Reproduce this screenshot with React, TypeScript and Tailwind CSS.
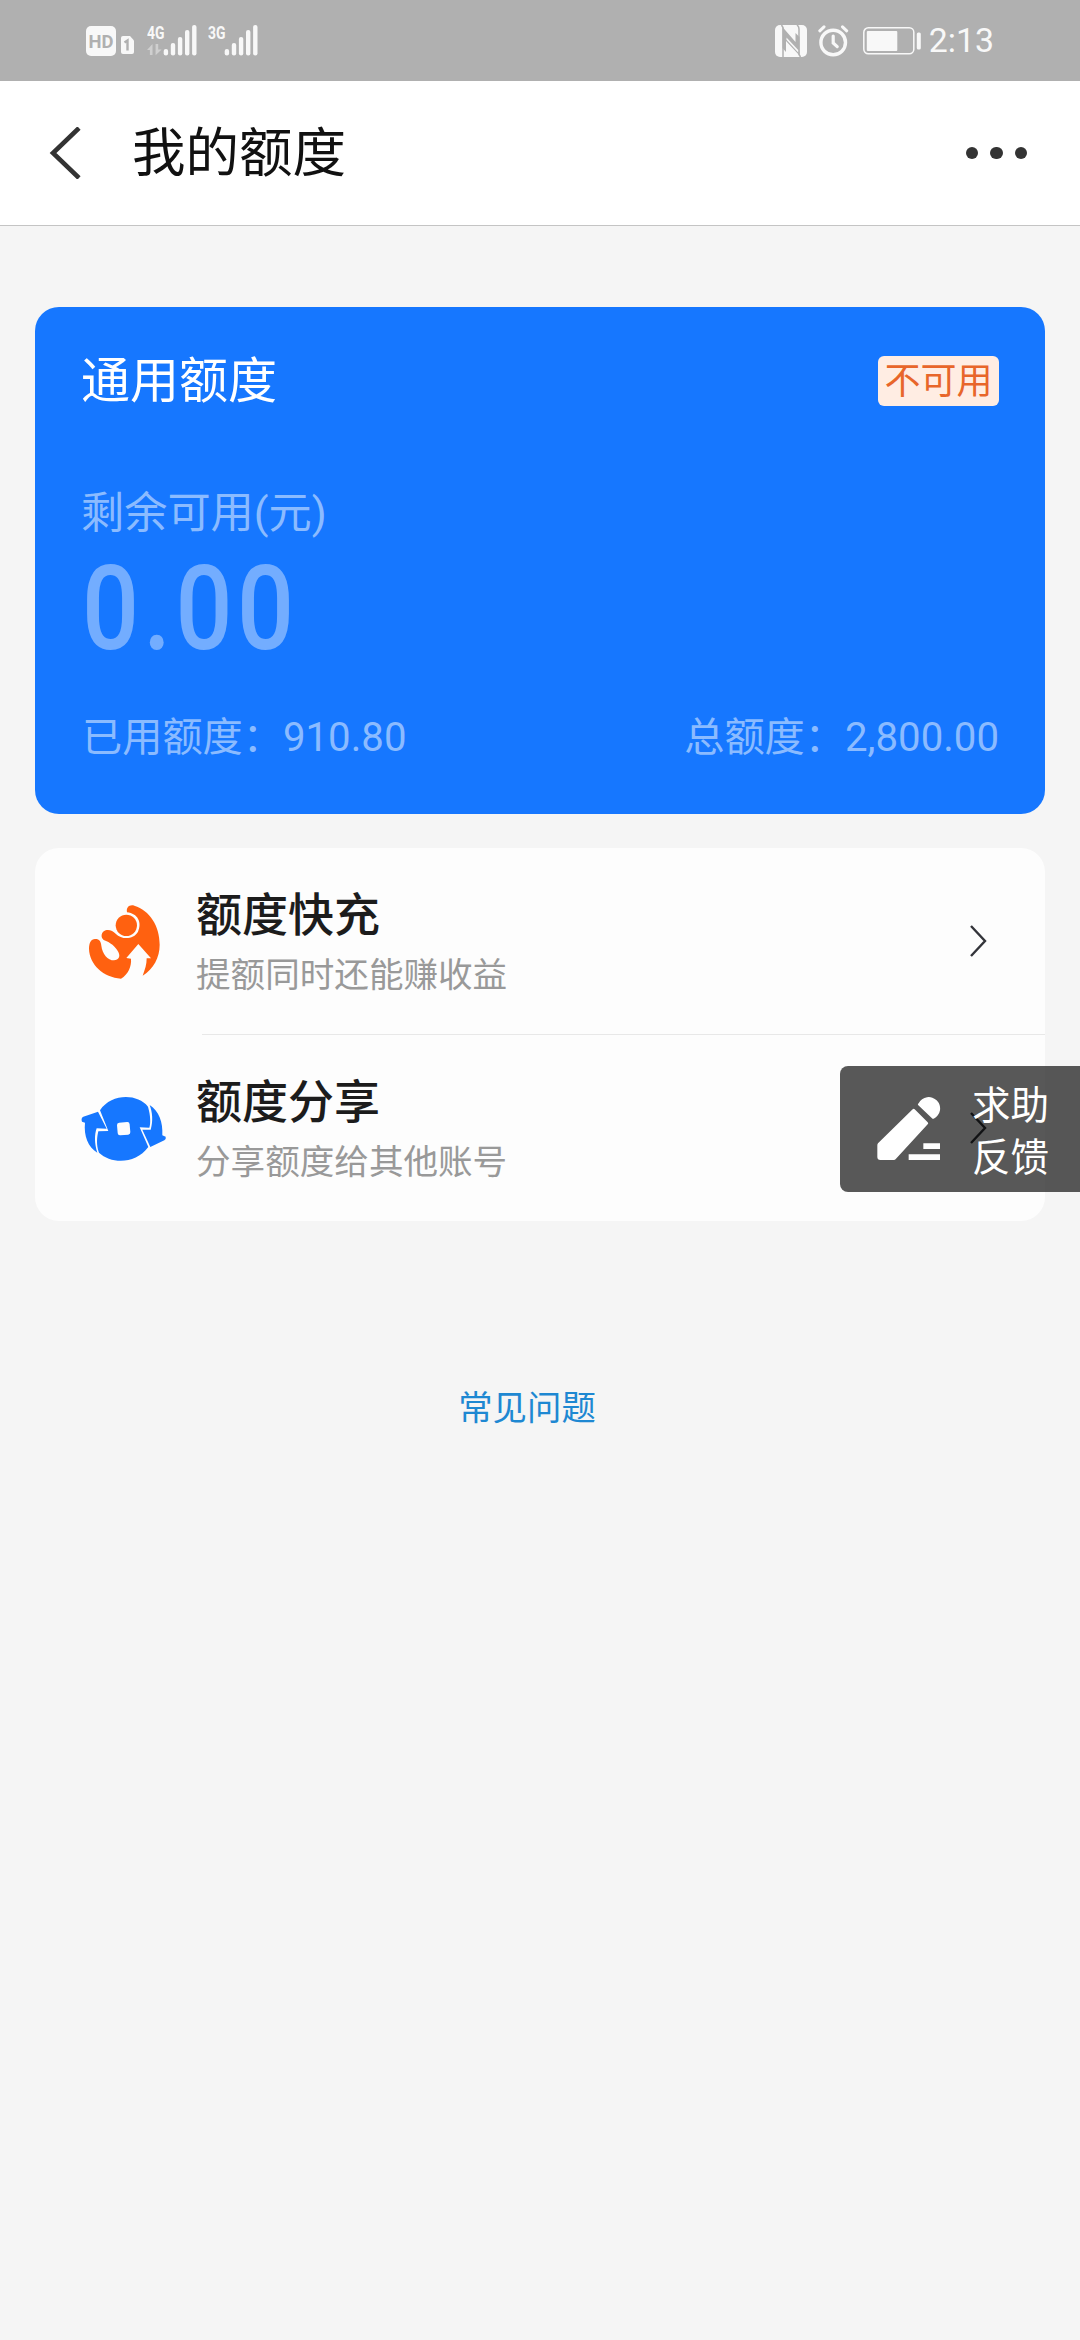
import React from 'react';

type SignalProps = {
  label: string;
  showTraffic?: boolean;
};

type QuotaRowProps = {
  title: string;
  desc: string;
  icon: React.ReactNode;
};

const SIGNAL_BARS = [49, 43, 37, 30, 25];

const HdIcon = () => (
  <svg width="49" height="32" viewBox="86 25 49 32">
    <rect x="86" y="26" width="30" height="30" rx="5" fill="#f8f8f8" />
    <text x="88.5" y="48" fontSize="18.5" fontWeight="700" textLength="25" lengthAdjust="spacingAndGlyphs" fill="#b0b0b0">
      HD
    </text>
    <path d="M123 36h7l4 4.5V52a2 2 0 0 1-2 2h-9a2 2 0 0 1-2-2V38a2 2 0 0 1 2-2z" fill="#f8f8f8" />
    <path d="M124.5 42.6l3-2v10" stroke="#b0b0b0" strokeWidth="2.4" fill="none" />
  </svg>
);

const Signal: React.FC<SignalProps> = ({ label, showTraffic }) => (
  <svg width="50" height="44" viewBox="0 19 50 44">
    <text x="0" y="38.7" fontSize="18.5" fontWeight="700" textLength="17.5" lengthAdjust="spacingAndGlyphs" fill="#f8f8f8">
      {label}
    </text>
    {showTraffic && (
      <path d="M0 50l5.5-6v11h-2.6v-5zM8.6 44h2.6v5.500h3.400l-6 5.800z" fill="#cfcfcf" />
    )}
    {SIGNAL_BARS.map((top, i) => (
      <rect key={top} x={16.7 + i * 7.1} y={top} width="4.4" height={55.5 - top} rx="2.1" fill="#f8f8f8" />
    ))}
  </svg>
);

const NfcIcon = () => (
  <svg width="32" height="32" viewBox="0 0 32 32">
    <rect width="32" height="32" rx="5" fill="#f8f8f8" />
    <path d="M6.5 0L8 2.5V32M25.5 32L24 29.5V4C24 2 23.3 1 22 0" stroke="#b0b0b0" strokeWidth="1.5" fill="none" />
    <path d="M7.5 2L20.5 17V8L24.5 12V30.5L11 16V27L7.5 23Z" fill="#b0b0b0" />
    <path d="M11.5 12.5L23.2 25V27.5L11.5 14.8Z" fill="#f8f8f8" />
  </svg>
);

const AlarmIcon = () => (
  <svg width="31" height="32" viewBox="0 0 31 32" fill="none" stroke="#f8f8f8" strokeLinecap="round">
    <circle cx="15.2" cy="17.5" r="12.3" strokeWidth="3.4" />
    <path d="M15.2 11v7l4 3.6" strokeWidth="3.2" />
    <path d="M1.8 5.8l4.200-4M28.700 5.800l-4.200-4" strokeWidth="3" />
  </svg>
);

const BatteryIcon = () => (
  <svg width="58" height="28" viewBox="0 0 58 28" fill="#f8f8f8">
    <rect x="0.8" y="0.8" width="50" height="26" rx="4.5" fill="none" stroke="#f8f8f8" strokeWidth="1.5" />
    <rect x="3.8" y="4" width="30.5" height="20" rx="1" />
    <rect x="53.8" y="5.5" width="4" height="17" rx="1.5" />
  </svg>
);

const BoostIcon = () => (
  <svg width="86" height="86" viewBox="0 0 258 258" fill="#ff6110">
    <path d="M138 43C135 28 145 19 160 23C206 38 236 82 236 140C236 178 218 212 185 233C192 214 197 200 197 181H210L172 138L136 180L150 182C152 206 142 228 120 242C68 238 25 200 24 152C24 134 30 124 42 123C54 122 60 130 61 143C64 168 80 187 99 187C113 186 119 176 112 162C104 146 88 133 68 126C58 118 60 102 74 97C86 94 96 100 104 107C124 127 158 124 171 101C184 74 170 46 138 43Z" />
    <circle cx="136" cy="82" r="32" />
  </svg>
);

const ShareIcon = () => (
  <svg width="95" height="76" viewBox="0 0 285 228" fill="#1677ff">
    {/* coin */}
    <path d="M72 61C106 10 184 10 216 50C224 78 224 100 220 113L191 112L217 171C178 224 105 222 69 188C60 165 63 140 67 124L97 123Z" />
    {/* arrows */}
    <path d="M66 65L92 116L62 115C55 135 55 160 64 188C36 170 23 138 27 98L18 95Q14 84 22 80Z" />
    <path d="M221 45C249 64 261 96 259 136L269 140Q271 148 265 151L223 171L199 119L224 119C232 92 229 66 221 45Z" />
    <rect x="124" y="97" width="38" height="38" rx="7" transform="rotate(-5 143 116)" fill="#fdfdfd" />
  </svg>
);

const PencilIcon = () => (
  <svg width="64" height="66" viewBox="0 -6 192 198" fill="#fff">
    <path d="M107 34a4 4 0 0 1 6 0l39 39a4 4 0 0 1 0 6L57 182a10 10 0 0 1-7 4H10a9 9 0 0 1-9-9v-35a9 9 0 0 1 2-6z" />
    <path d="M125 16a34 34 0 1 1 45 46a4 4 0 0 1-5-1L124 22a4 4 0 0 1 1-6z" />
    <path d="M139 136h50v17h-50zM95 169h94v17H95z" />
  </svg>
);

const QuotaRow: React.FC<QuotaRowProps> = ({ title, desc, icon }) => (
  <div className="flex h-[186px] items-center pl-[41px] pr-[57px]">
    <div className="flex w-[95px] shrink-0 justify-center">{icon}</div>
    <div className="ml-[25px] flex-1 pt-[8px]">
      <h3 className="text-[46px] leading-[60px] font-medium text-[#1c1c1c]">{title}</h3>
      <p className="text-[34.6px] leading-[60px] text-[#999]">{desc}</p>
    </div>
    <svg width="20" height="34" viewBox="0 0 20 34" fill="none" stroke="#33343a" strokeWidth="2.4">
      <path d="M3 2l14 15L3 32" />
    </svg>
  </div>
);

const StatusBar = () => (
  <div className="flex h-[81px] items-center bg-[#b0b0b0] px-[86px] text-[#f8f8f8]">
    <HdIcon />
    <div className="ml-3 flex gap-[11px]">
      <Signal label="4G" showTraffic />
      <Signal label="3G" />
    </div>
    <div className="ml-auto flex items-center">
      <NfcIcon />
      <div className="ml-[11px]">
        <AlarmIcon />
      </div>
      <div className="ml-3.5">
        <BatteryIcon />
      </div>
      <span className="ml-2 text-[33.8px] leading-[40px]">2:13</span>
    </div>
  </div>
);

const App: React.FC = () => {
  return (
    <div className="relative min-h-[2340px] w-[1080px] overflow-hidden bg-[#f5f5f5] font-[Roboto,'Noto_Sans_CJK_SC',sans-serif]" lang="zh-CN">
      <StatusBar />

      {/* HEADER */}
      <header className="flex h-[145px] items-center border-b border-[#c4c4c4] bg-white pl-[48px] pr-[53px]">
        <svg width="34" height="52" viewBox="0 0 34 52" fill="none" stroke="#333" strokeWidth="4.6">
          <path d="M31 1L5 26L31 51" />
        </svg>
        <h1 className="ml-[50px] pt-[2px] text-[53.5px] leading-[70px] text-[#111]">我的额度</h1>
        <div className="ml-auto flex gap-3">
          <i className="size-[12.3px] rounded-full bg-[#333]" />
          <i className="size-[12.3px] rounded-full bg-[#333]" />
          <i className="size-[12.3px] rounded-full bg-[#333]" />
        </div>
      </header>

      <main className="px-[35px] pt-[81px]">
        {/* QUOTA CARD */}
        <section className="h-[507px] rounded-[24px] bg-[#1677ff] px-[46px] pt-[45px] text-[#8bbbff]">
          <div className="flex items-center justify-between">
            <h2 className="text-[49px] leading-[60px] text-white">通用额度</h2>
            <span className="mb-[2px] flex h-[50px] w-[121px] items-center justify-center rounded-[6px] bg-[#ffede3] pt-[2px] text-[36px] leading-[48px] text-[#e8662a]">
              不可用
            </span>
          </div>
          <p className="mt-[72px] text-[43.2px] leading-[60px]">剩余可用(元)</p>
          <p className="mt-[20px] ml-px origin-left scale-x-[0.865] text-[116px] leading-[90px] font-medium tracking-[5px] text-[#73adff]">
            0.00
          </p>
          <div className="mt-[54px] flex justify-between pl-px text-[40.2px] leading-[60px]">
            <span>已用额度：910.80</span>
            <span>总额度：2,800.00</span>
          </div>
        </section>

        {/* ENTRIES */}
        <section className="mt-[34px] rounded-[24px] bg-[#fdfdfd]">
          <QuotaRow title="额度快充" desc="提额同时还能赚收益" icon={<BoostIcon />} />
          <div className="ml-[167px] h-px bg-[#e8e8e8]" />
          <QuotaRow title="额度分享" desc="分享额度给其他账号" icon={<ShareIcon />} />
        </section>

        <a className="mt-[157px] mr-[26px] block text-center text-[34.4px] leading-[60px] text-[#1e88d2]">常见问题</a>
      </main>

      {/* FLOATING FEEDBACK */}
      <div className="absolute top-[1066px] right-0 flex h-[126px] w-[240px] items-center rounded-l-[8px] bg-black/65 pl-[37px]">
        <PencilIcon />
        <div className="ml-[31px] pt-[5px] text-[38.5px] leading-[52px] text-white">
          <div>求助</div>
          <div>反馈</div>
        </div>
      </div>
    </div>
  );
};

export default App;
